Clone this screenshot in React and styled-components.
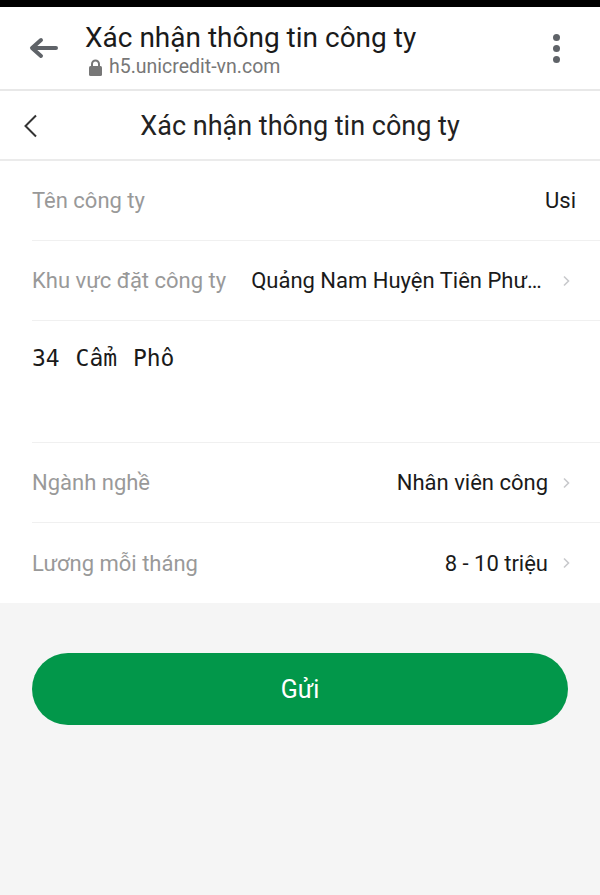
import React from 'react'
import styled, { createGlobalStyle } from 'styled-components'

const GlobalStyle = createGlobalStyle`
    html, body {
        margin: 0;
        padding: 0;
        background: #f5f5f5;
        font-family: Roboto, "Noto Sans", sans-serif;
    }
`

const Page = styled.div`
    width: 600px;
    min-height: 895px;
    background: #f5f5f5;
    border-top: 7px solid #000;
    box-sizing: border-box;
`

const BrowserBar = styled.div`
    height: 84px;
    background: #fff;
    border-bottom: 2px solid #e8e8e8;
    display: flex;
    align-items: flex-start;
    padding: 0 28px;
    box-sizing: border-box;
`

const BrowserBack = styled.div`
    width: 30px;
    height: 22px;
    margin: 30px 27px 0 0;
    display: flex;
`

const BrowserText = styled.div`
    flex: 1;
    display: flex;
    flex-direction: column;
    padding-top: 14px;
`

const BrowserTitle = styled.div`
    font-size: 28px;
    color: #1a1a1a;
    line-height: 34px;
`

const Url = styled.div`
    display: flex;
    align-items: center;
    gap: 6px;
    font-size: 19.5px;
    color: #777;
    line-height: 24px;
    margin-left: 3px;
`

const Kebab = styled.div`
    display: flex;
    flex-direction: column;
    gap: 4px;
    margin: 27px 12px 0 0;

    span {
        width: 7px;
        height: 7px;
        border-radius: 50%;
        background: #5f6368;
    }
`

const NavBar = styled.div`
    height: 70px;
    background: #fff;
    border-bottom: 2px solid #ebebeb;
    box-sizing: border-box;
    display: flex;
    align-items: center;
    justify-content: center;
    position: relative;
`

const NavBack = styled.div`
    position: absolute;
    left: 22px;
    top: 23px;
`

const NavTitle = styled.div`
    font-size: 27px;
    color: #222;
    margin-top: 2px;
`

const Form = styled.div`
    background: #fff;
`

const Row = styled.div`
    height: 80px;
    margin-left: 32px;
    padding-right: 24px;
    display: flex;
    align-items: center;
    box-sizing: border-box;
    border-bottom: ${p => (p.last ? 'none' : '1px solid #f0f0f0')};
`

const Label = styled.div`
    font-size: 22px;
    color: #999;
    white-space: nowrap;
    margin-right: 25px;
`

const Value = styled.div`
    flex: 1;
    min-width: 0;
    font-size: 22px;
    color: #1a1a1a;
    text-align: right;
    white-space: nowrap;
    overflow: hidden;
    text-overflow: ellipsis;
`

const Arrow = styled.div`
    width: 22px;
    padding-right: 6px;
    display: flex;
    justify-content: flex-end;
    flex-shrink: 0;
`

const Address = styled.div`
    height: 122px;
    margin-left: 32px;
    border-bottom: 1px solid #f0f0f0;
    padding-top: 24px;
    box-sizing: border-box;
    font-family: "DejaVu Sans Mono", monospace;
    font-size: 23px;
    color: #1a1a1a;
    word-spacing: 2px;
`

const ButtonWrap = styled.div`
    padding: 50px 32px 0;
`

const Submit = styled.button`
    width: 100%;
    height: 72px;
    border: none;
    border-radius: 36px;
    background: #02974a;
    color: #fff;
    font-family: Roboto, sans-serif;
    font-size: 25px;
`

const Chevron = () => (
    <svg width="8" height="12" viewBox="0 0 8 12">
        <path d="M2 1.5 L6.5 6 L2 10.5" fill="none" stroke="#c8c9cc" strokeWidth="1.6" />
    </svg>
)

const rows = [
    { label: 'Ngành nghề', value: 'Nhân viên công' },
    { label: 'Lương mỗi tháng', value: '8 - 10 triệu', last: true },
]

export default function App() {
    return (
        <Page>
            <GlobalStyle />
            <BrowserBar>
                <BrowserBack>
                    <svg width="30" height="22" viewBox="0 0 30 22">
                        <path d="M28 11 H5 M13 3 L4 11 L13 19" fill="none" stroke="#5f6368" strokeWidth="4" strokeLinecap="round" strokeLinejoin="round" />
                    </svg>
                </BrowserBack>
                <BrowserText>
                    <BrowserTitle>Xác nhận thông tin công ty</BrowserTitle>
                    <Url>
                        <svg width="15" height="17" viewBox="0 0 15 17">
                            <path d="M4 7 V5 a3.5 3.5 0 0 1 7 0 V7" fill="none" stroke="#777" strokeWidth="2" />
                            <rect x="1" y="7" width="13" height="10" rx="1.5" fill="#777" />
                        </svg>
                        h5.unicredit-vn.com
                    </Url>
                </BrowserText>
                <Kebab>
                    <span />
                    <span />
                    <span />
                </Kebab>
            </BrowserBar>

            <NavBar>
                <NavBack>
                    <svg width="18" height="24" viewBox="0 0 18 24">
                        <path d="M14 1.5 L3.5 12 L14 22.5" fill="none" stroke="#333" strokeWidth="2" />
                    </svg>
                </NavBack>
                <NavTitle>Xác nhận thông tin công ty</NavTitle>
            </NavBar>

            <Form>
                <Row>
                    <Label>Tên công ty</Label>
                    <Value>Usi</Value>
                </Row>
                <Row>
                    <Label>Khu vực đặt công ty</Label>
                    <Value>Quảng Nam Huyện Tiên Phước Xã Tiên Cẩm</Value>
                    <Arrow><Chevron /></Arrow>
                </Row>
                <Address>34 Cẩm Phô</Address>
                {rows.map(r => (
                    <Row key={r.label} last={r.last}>
                        <Label>{r.label}</Label>
                        <Value>{r.value}</Value>
                        <Arrow><Chevron /></Arrow>
                    </Row>
                ))}
            </Form>

            <ButtonWrap>
                <Submit>Gửi</Submit>
            </ButtonWrap>
        </Page>
    )
}
